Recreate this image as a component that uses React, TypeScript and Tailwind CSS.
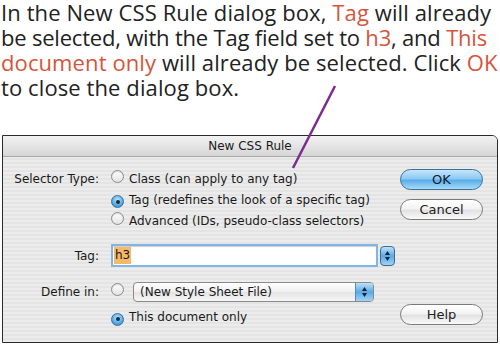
import React from "react";

const red = "text-[#d6553c]";

function Radio({ on }: { on?: boolean }) {
  return on ? (
    <span className="relative inline-flex h-[13px] w-[13px] shrink-0 items-center justify-center rounded-full border border-[#3b6e9c] bg-[radial-gradient(circle_at_50%_35%,#bfe3fb_0%,#5aaeea_55%,#2c7fc7_100%)]">
      <span className="h-[4px] w-[4px] rounded-full bg-[#1c2a3a]" />
    </span>
  ) : (
    <span className="inline-block h-[13px] w-[13px] shrink-0 rounded-full border border-[#8c8c8c] bg-[linear-gradient(#ffffff,#e2e2e2)] shadow-[inset_0_1px_1px_rgba(0,0,0,0.15)]" />
  );
}

function Arrows() {
  return (
    <svg width="7" height="12" viewBox="0 0 7 12">
      <path d="M3.5 1 L6 5 L1 5 Z" fill="#10243a" />
      <path d="M3.5 11 L6 7 L1 7 Z" fill="#10243a" />
    </svg>
  );
}

function AquaButton({ label, primary }: { label: string; primary?: boolean }) {
  return (
    <div
      className={
        "flex h-[21px] w-[83px] items-center justify-center rounded-full border text-[13px] " +
        (primary
          ? "border-[#3a6f9e] bg-[linear-gradient(#c6e5fa_0%,#8ccaf3_45%,#5aaeea_55%,#a9dbf8_100%)] text-[#102030]"
          : "border-[#7a7a7a] bg-[linear-gradient(#ffffff_0%,#f3f3f3_45%,#e2e2e2_55%,#fafafa_100%)] text-[#222]")
      }
    >
      {label}
    </div>
  );
}

export default function App() {
  return (
    <div className="relative h-[344px] w-[500px] overflow-hidden bg-white">
      <div
        className="whitespace-nowrap pl-[1px] text-[22px] leading-[25px] tracking-[0.1px] text-[#222]"
        style={{ fontFamily: '"Open Sans", sans-serif' }}
      >
        <div>
          In the New CSS Rule dialog box, <span className={red}>Tag</span> will already
        </div>
        <div className="tracking-[-0.2px]">
          be selected, with the Tag field set to <span className={red}>h3</span>, and{" "}
          <span className={red}>This</span>
        </div>
        <div>
          <span className={red}>document only</span> will already be selected. Click{" "}
          <span className={red}>OK</span>
        </div>
        <div>to close the dialog box.</div>
      </div>

      <div
        className="absolute left-[2px] top-[135px] h-[208px] w-[496px] overflow-hidden rounded-tr-[6px] border border-[#2a2a2a] bg-[repeating-linear-gradient(#ececec_0px,#ececec_2px,#e4e4e4_2px,#e4e4e4_4px)] text-[#1a1a1a]"
        style={{ fontFamily: '"DejaVu Sans", sans-serif' }}
      >
        <div className="flex h-[21px] items-center justify-center border-b border-[#a8a8a8] bg-[linear-gradient(#f2f2f2,#d6d6d6)] text-[12px]">
          New CSS Rule
        </div>
        <div className="flex">
          <div className="flex-1 pt-[11px] text-[12px]">
            <div className="flex h-[21px] items-center">
              <span className="w-[102px] pr-[6px] text-right">Selector Type:</span>
              <span className="ml-[6px]"><Radio /></span>
              <span className="ml-[5px]">Class (can apply to any tag)</span>
            </div>
            <div className="flex h-[21px] items-center">
              <span className="w-[102px]" />
              <span className="ml-[6px]"><Radio on /></span>
              <span className="ml-[5px]">Tag (redefines the look of a specific tag)</span>
            </div>
            <div className="flex h-[21px] items-center">
              <span className="w-[102px]" />
              <span className="ml-[6px]"><Radio /></span>
              <span className="ml-[5px]">Advanced (IDs, pseudo-class selectors)</span>
            </div>
            <div className="mt-[13px] flex h-[23px] items-center">
              <span className="w-[102px] pr-[6px] text-right">Tag:</span>
              <div className="ml-[6px] flex h-[23px] w-[267px] items-center border-2 border-[#7fb6e3] bg-white px-[1px] shadow-[inset_0_1px_1px_rgba(0,0,0,0.2)]">
                <span className="bg-[#f7b867] px-[1px] leading-[17px]">h3</span>
              </div>
              <div className="ml-[2px] flex h-[20px] w-[15px] items-center justify-center rounded-[4px] border border-[#3d6a93] bg-[linear-gradient(#bfe1f8,#5aa9e6_50%,#9fd3f6)]">
                <Arrows />
              </div>
            </div>
            <div className="mt-[15px] flex h-[20px] items-center">
              <span className="w-[102px] pr-[6px] text-right">Define in:</span>
              <span className="ml-[6px]"><Radio /></span>
              <div className="ml-[9px] flex h-[20px] w-[241px] items-center overflow-hidden rounded-[4px] border border-[#8a8a8a] bg-[linear-gradient(#ffffff,#f0f0f0_50%,#e4e4e4_51%,#f6f6f6)]">
                <span className="flex-1 pl-[6px]">(New Style Sheet File)</span>
                <div className="flex h-full w-[18px] items-center justify-center border-l border-[#5a8ab5] bg-[linear-gradient(#bfe1f8,#5aa9e6_50%,#9fd3f6)]">
                  <Arrows />
                </div>
              </div>
            </div>
            <div className="mt-[5px] flex h-[20px] items-center">
              <span className="w-[102px]" />
              <span className="ml-[6px]"><Radio on /></span>
              <span className="ml-[5px]">This document only</span>
            </div>
          </div>
          <div className="flex w-[97px] flex-col pt-[12px]">
            <AquaButton label="OK" primary />
            <div className="mt-[9px]">
              <AquaButton label="Cancel" />
            </div>
            <div className="mt-[84px]">
              <AquaButton label="Help" />
            </div>
          </div>
        </div>
      </div>

      <svg className="absolute left-0 top-0" width="500" height="344" viewBox="0 0 500 344">
        <line x1="335" y1="86" x2="293" y2="168" stroke="#7a2c90" strokeWidth="2.5" />
      </svg>
    </div>
  );
}
